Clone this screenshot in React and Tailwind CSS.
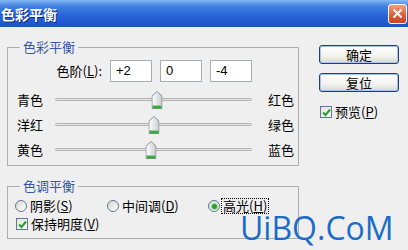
import React from 'react';

// Photoshop "色彩平衡" dialog, XP theme.
const cjk = "font-['Noto_Sans_CJK_SC',sans-serif]";

const Thumb = () => (
  <svg width="11" height="18" viewBox="0 0 11 18">
    <defs>
      <linearGradient id="tg" x1="0" x2="1" y1="0" y2="0">
        <stop offset="0" stopColor="#ffffff" />
        <stop offset="1" stopColor="#c9ccd2" />
      </linearGradient>
    </defs>
    <path d="M5.5 0.5 L10.5 5 L10.5 17.5 L0.5 17.5 L0.5 5 Z" fill="url(#tg)" stroke="#8d949c" />
    <rect x="1" y="14" width="9" height="3.5" fill="#3da447" />
    <rect x="1" y="14" width="9" height="1" fill="#8fd68f" />
  </svg>
);

const Slider = ({ left, right, pos }) => (
  <div className="flex items-center h-[25px]">
    <span className="w-[38px] pl-[9px] box-content">{left}</span>
    <div className="relative w-[197px] h-[3px] rounded-full border border-[#b3b3b3] bg-[#e6e6e6]">
      <div className="absolute top-[-8px] -translate-x-1/2" style={{ left: pos }}>
        <Thumb />
      </div>
    </div>
    <span className="ml-[16px]">{right}</span>
  </div>
);

const Radio = ({ checked }) => (
  <span className="w-[12px] h-[12px] rounded-full border border-[#5f7894] bg-[linear-gradient(135deg,#d8d8d0,#ffffff)] flex items-center justify-center shrink-0">
    {checked && <span className="w-[5px] h-[5px] rounded-full bg-[#2c9f2c] shadow-[0_0_0_1px_#a8dca8]" />}
  </span>
);

const Check = () => (
  <span className="w-[12px] h-[12px] border border-[#5f7894] bg-[linear-gradient(135deg,#e4e4dc,#ffffff)] flex items-center justify-center shrink-0">
    <svg width="9" height="9" viewBox="0 0 9 9">
      <path d="M1 4.5 L3.5 7 L8 1.5" fill="none" stroke="#21a121" strokeWidth="2" />
    </svg>
  </span>
);

const XpButton = ({ children, className = '' }) => (
  <div
    className={`w-[80px] h-[19px] rounded-[3px] border border-[#1c3f78] bg-[linear-gradient(to_bottom,#ffffff,#f2f2ee_60%,#d8d8d2)] shadow-[inset_0_0_0_1px_#a9c4ee] flex items-center justify-center text-[13px] leading-none ${className}`}
  >
    {children}
  </div>
);

export default function App() {
  return (
    <div className={`relative w-[408px] h-[250px] overflow-hidden bg-[#efefef] text-[13px] text-black ${cjk}`}>
      {/* title bar */}
      <div className="h-[27px] flex items-center justify-between pl-[1px] pr-[1px] bg-[linear-gradient(to_bottom,#86b8f4_0%,#4483e4_22%,#2a66d8_55%,#1d52c4_100%)]">
        <span className="text-white font-bold text-[14px] leading-none [text-shadow:1px_1px_0_#0a2a80]">色彩平衡</span>
        <div className="w-[19px] h-[20px] rounded-[3px] border border-white bg-[linear-gradient(to_bottom,#f0a080,#dc5a34_60%,#c8461f)] flex items-center justify-center">
          <svg width="11" height="11" viewBox="0 0 11 11">
            <path d="M1.5 1.5 L9.5 9.5 M9.5 1.5 L1.5 9.5" stroke="#fff" strokeWidth="2" />
          </svg>
        </div>
      </div>

      <div className="flex">
        {/* left column */}
        <div className="ml-[7px] w-[292px]">
          <fieldset className="mt-[13px] border border-[#acacac] pb-[3px] min-w-0">
            <legend className="ml-[12px] px-[3px] leading-[14px] text-[#3356a6]">色彩平衡</legend>
            <div className="flex items-center mt-[6px] h-[22px]">
              <span className="w-[94px] text-right">
                色阶(<span className="underline">L</span>):
              </span>
              <div className="ml-[8px] flex gap-[8px]">
                {['+2', '0', '-4'].map((v) => (
                  <div key={v} className="w-[42px] h-[22px] bg-white border border-[#a7adb5] pl-[5px] flex items-center font-['Liberation_Sans',sans-serif] text-[13px]">
                    {v}
                  </div>
                ))}
              </div>
            </div>
            <div className="mt-[5px]">
              <Slider left="青色" right="红色" pos={101} />
              <Slider left="洋红" right="绿色" pos={98} />
              <Slider left="黄色" right="蓝色" pos={95} />
            </div>
          </fieldset>

          <fieldset className="mt-[13px] border border-[#acacac] pb-[6px] min-w-0">
            <legend className="ml-[12px] px-[3px] leading-[14px] text-[#3356a6]">色调平衡</legend>
            <div className="flex items-center mt-[5px] h-[16px] pl-[7px]">
              <div className="w-[92px] flex items-center gap-[3px]">
                <Radio />
                <span>阴影(<span className="underline">S</span>)</span>
              </div>
              <div className="w-[101px] flex items-center gap-[3px]">
                <Radio />
                <span>中间调(<span className="underline">D</span>)</span>
              </div>
              <div className="flex items-center gap-[2px]">
                <Radio checked />
                <span className="outline outline-1 outline-dotted outline-black px-[1px] leading-[14px]">
                  高光(<span className="underline">H</span>)
                </span>
              </div>
            </div>
            <div className="flex items-center mt-[2px] h-[16px] pl-[8px] gap-[3px]">
              <Check />
              <span>保持明度(<span className="underline">V</span>)</span>
            </div>
          </fieldset>
        </div>

        {/* right column */}
        <div className="ml-[20px] mt-[18px] flex flex-col">
          <XpButton>确定</XpButton>
          <XpButton className="mt-[9px]">复位</XpButton>
          <div className="mt-[13px] h-[14px] flex items-center gap-[3px] pl-[1px]">
            <Check />
            <span>预览(<span className="underline">P</span>)</span>
          </div>
        </div>
      </div>

      {/* watermark */}
      <span className="absolute left-[240px] top-[212px] text-[32px] leading-none text-[#1b6cc8] font-['Open_Sans',sans-serif]">
        UiBQ.CoM
      </span>
    </div>
  );
}
